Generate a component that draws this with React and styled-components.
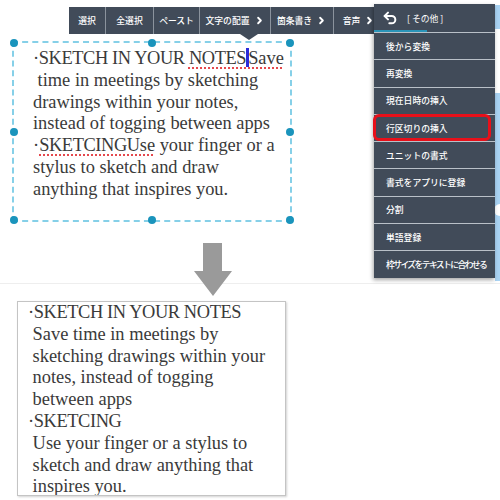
import React from "react";
import styled, { createGlobalStyle } from "styled-components";
import { Undo2, ChevronRight } from "lucide-react";

const Global = createGlobalStyle`
  body {
    margin: 0;
    background: #fff;
  }
`;

const Stage = styled.div`
  position: relative;
  width: 500px;
  height: 500px;
  overflow: hidden;
  background: #fff;
  font-family: "Liberation Serif", serif;
`;

const Toolbar = styled.div`
  position: relative;
  display: flex;
  margin: 7px 0 0 69px;
  height: 27px;
  width: 310px;
  background: #414b59;
`;

const ToolButton = styled.div`
  display: flex;
  align-items: center;
  justify-content: center;
  gap: 4px;
  width: ${(p) => p.w}px;
  flex: none;
  border-right: 1px solid #8b939d;
  color: #fff;
  font-family: "Noto Sans CJK JP", sans-serif;
  font-size: 8.8px;
  font-weight: 500;
  &:last-child {
    border-right: none;
  }
`;

const Pointer = styled.div`
  position: absolute;
  left: 171px;
  bottom: -6px;
  width: 0;
  height: 0;
  border-left: 9px solid transparent;
  border-right: 9px solid transparent;
  border-top: 6px solid #414b59;
`;

const TextBox = styled.div`
  position: relative;
  margin: 7px 0 0 12px;
  width: 280px;
  height: 181px;
  box-sizing: border-box;
  border: 2px dashed #86d0e8;
  padding: 5px 0 0 19px;
`;

const Handle = styled.span`
  position: absolute;
  width: 8px;
  height: 8px;
  border-radius: 50%;
  background: #1a94bc;
  left: ${(p) => p.x}%;
  top: ${(p) => p.y}%;
  transform: translate(-50%, -50%);
`;

const Para = styled.div`
  font-size: 18.4px;
  line-height: 21.8px;
  color: #3a3a3a;
`;

const Line = styled.div`
  white-space: pre;
`;

const Caps = styled.span`
  letter-spacing: -0.4px;
`;

const Misspelt = styled.span`
  text-decoration: underline dotted #e5484d;
  text-underline-offset: 3px;
  text-decoration-thickness: 1.5px;
`;

const Caret = styled.span`
  display: inline-block;
  width: 3px;
  height: 19px;
  background: #2b2bd9;
  vertical-align: -3px;
  margin: 0 -1px 0 0;
`;

const ArrowRow = styled.div`
  position: relative;
  height: 79px;
  &::before {
    content: "";
    position: absolute;
    left: 0;
    right: 0;
    top: 61px;
    height: 1px;
    background: #eeeeee;
  }
`;

const DownArrow = styled.svg`
  position: absolute;
  left: 194px;
  top: 21px;
`;

const ResultBox = styled.div`
  margin-left: 17px;
  width: 269px;
  height: 195px;
  box-sizing: border-box;
  border: 1px solid #c4c4c4;
  box-shadow: 1px 1px 2px rgba(0, 0, 0, 0.18);
  padding: 0 0 0 10px;
  overflow: hidden;
  background: #fff;
`;

const Menu = styled.div`
  position: absolute;
  left: 374px;
  top: 4px;
  width: 121px;
  background: #414b59;
  box-shadow: -1px 2px 4px rgba(0, 0, 0, 0.35);
  font-family: "Noto Sans CJK JP", sans-serif;
  color: #fff;
`;

const MenuHeader = styled.div`
  position: relative;
  display: flex;
  align-items: center;
  gap: 9px;
  height: 28px;
  padding-left: 8px;
  font-size: 8.8px;
  &::after {
    content: "";
    position: absolute;
    left: 0;
    bottom: 0;
    width: 53px;
    height: 2px;
    background: #2a94b8;
  }
`;

const MenuItem = styled.div`
  position: relative;
  display: flex;
  align-items: center;
  height: 27.3px;
  box-sizing: border-box;
  border-top: 1.5px solid #b9c0c8;
  padding-left: 12px;
  font-size: 8.8px;
  font-weight: 500;
  white-space: nowrap;
  letter-spacing: ${(p) => (p.tight ? "-1.6px" : "0")};
`;

const Highlight = styled.div`
  position: absolute;
  left: -1px;
  right: 4px;
  top: -1px;
  bottom: 0px;
  border: 3px solid #e8101a;
  border-radius: 6px;
`;

const EdgeStrip = styled.div`
  position: absolute;
  right: 0;
  width: 5px;
  top: ${(p) => p.top}px;
  height: ${(p) => p.h}px;
  background: #a9d3f3;
`;

const EdgeKnob = styled.div`
  position: absolute;
  right: -6px;
  top: 204px;
  width: 12px;
  height: 12px;
  border-radius: 50%;
  background: #fff;
`;

const tools = [
  { label: "選択", w: 36 },
  { label: "全選択", w: 47 },
  { label: "ペースト", w: 45 },
  { label: "文字の配置", w: 70, more: true },
  { label: "箇条書き", w: 62, more: true },
  { label: "音声", w: 50, more: true },
];

const menuItems = [
  "後から変換",
  "再変換",
  "現在日時の挿入",
  "行区切りの挿入",
  "ユニットの書式",
  "書式をアプリに登録",
  "分割",
  "単語登録",
  "枠サイズをテキストに合わせる",
];

const handles = [
  [0, 0], [50, 0], [100, 0],
  [0, 50], [100, 50],
  [0, 100], [50, 100], [100, 100],
];

export default function App() {
  return (
    <Stage>
      <Global />
      <Toolbar>
        {tools.map((t) => (
          <ToolButton key={t.label} w={t.w}>
            {t.label}
            {t.more && <ChevronRight size={11} strokeWidth={4} />}
          </ToolButton>
        ))}
        <Pointer />
      </Toolbar>

      <TextBox>
        {handles.map(([x, y]) => (
          <Handle key={x + "-" + y} x={x} y={y} />
        ))}
        <Para>
          <Line>
            <Caps>·SKETCH IN YOUR </Caps>
            <Misspelt><Caps>NOTES</Caps><Caret />Save</Misspelt>
          </Line>
          <Line> time in meetings by sketching</Line>
          <Line>drawings within your notes,</Line>
          <Line>instead of togging between apps</Line>
          <Line>
            ·<Misspelt><Caps>SKETCINGU</Caps>se</Misspelt> your finger or a
          </Line>
          <Line>stylus to sketch and draw</Line>
          <Line>anything that inspires you.</Line>
        </Para>
      </TextBox>

      <ArrowRow>
        <DownArrow width="38" height="53" viewBox="0 0 38 53">
          <path d="M9 0 H28 V28 H38 L19 53 L0 28 H9 Z" fill="#9a9a9a" />
        </DownArrow>
      </ArrowRow>

      <ResultBox>
        <Para>
          <Line><Caps>·SKETCH IN YOUR NOTES</Caps></Line>
          <Line> Save time in meetings by</Line>
          <Line> sketching drawings within your</Line>
          <Line> notes, instead of togging</Line>
          <Line> between apps</Line>
          <Line><Caps>·SKETCING</Caps></Line>
          <Line> Use your finger or a stylus to</Line>
          <Line> sketch and draw anything that</Line>
          <Line> inspires you.</Line>
        </Para>
      </ResultBox>

      <EdgeStrip top={5} h={24} />
      <EdgeStrip top={93} h={188} />
      <EdgeKnob />

      <Menu>
        <MenuHeader>
          <Undo2 size={16} strokeWidth={3} />
          <span>[ その他 ]</span>
        </MenuHeader>
        {menuItems.map((m, i) => (
          <MenuItem key={m} tight={i === menuItems.length - 1}>
            {m}
            {m === "行区切りの挿入" && <Highlight />}
          </MenuItem>
        ))}
      </Menu>
    </Stage>
  );
}
